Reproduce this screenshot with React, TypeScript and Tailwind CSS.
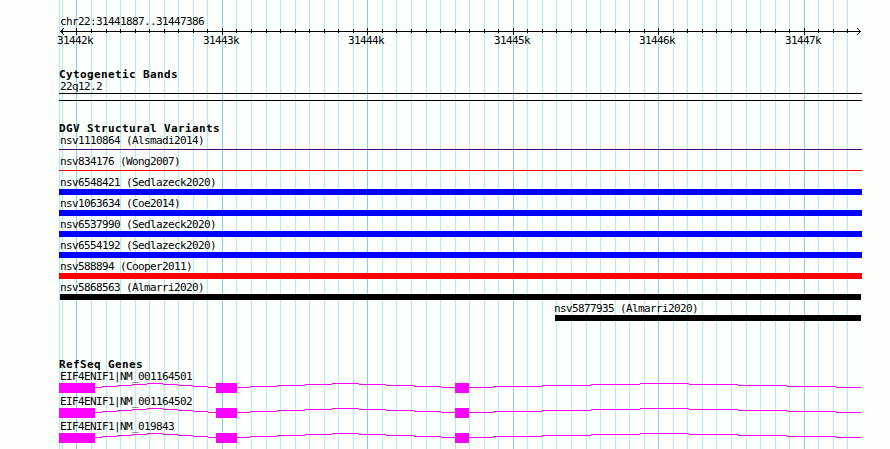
const START = 31441887;
const END = 31447386;
const LEFT = 60;
const WIDTH = 800;

const toX = (bp: number) => Math.round(LEFT + ((bp - START) * WIDTH) / (END - START + 1));

const ticks = Array.from({ length: 55 }, (_, i) => {
  const bp = 31441900 + i * 100;
  return { bp, x: toX(bp), major: bp % 1000 === 0 };
}).filter(t => t.x < 860);

const variants = [
  { name: 'nsv1110864 (Alsmadi2014)', bar: 'mt-[3px] h-px ml-[59px] w-[803px] bg-[#4b0082]' },
  { name: 'nsv834176 (Wong2007)', bar: 'mt-[3px] h-px ml-[59px] w-[803px] bg-[#ff0000]' },
  { name: 'nsv6548421 (Sedlazeck2020)', bar: 'mt-px h-1.5 ml-[59px] w-[803px] bg-[#0000ff]' },
  { name: 'nsv1063634 (Coe2014)', bar: 'mt-px h-1.5 ml-[59px] w-[803px] bg-[#0000ff]' },
  { name: 'nsv6537990 (Sedlazeck2020)', bar: 'mt-px h-1.5 ml-[59px] w-[803px] bg-[#0000ff]' },
  { name: 'nsv6554192 (Sedlazeck2020)', bar: 'mt-px h-1.5 ml-[59px] w-[803px] bg-[#0000ff]' },
  { name: 'nsv588894 (Cooper2011)', bar: 'mt-px h-1.5 ml-[59px] w-[803px] bg-[#ff0000]' },
  { name: 'nsv5868563 (Almarri2020)', bar: 'mt-px h-1.5 ml-[60px] w-[801px] bg-black' },
  { name: 'nsv5877935 (Almarri2020)', bar: 'mt-px h-1.5 ml-[555px] w-[306px] bg-black', indent: true },
];

const genes = ['EIF4ENIF1|NM_001164501', 'EIF4ENIF1|NM_001164502', 'EIF4ENIF1|NM_019843'];
const exons = [[59, 95], [216, 237], [455, 469]];
const introns = [[95, 216], [237, 455], [469, 861]];

// one pixel staircase up to the middle of the intron and back down
const hat = (from: number, to: number) => {
  const step = (to - from) / 8;
  let d = '';
  let x = from;
  for (let i = 0; i <= 8; i++) {
    const next = i === 8 ? to : Math.floor(from + step * (i + 0.5));
    d += `M${x} ${Math.abs(4 - i) + 0.5}H${next}`;
    x = next;
  }
  return d;
};

const Grid = () => (
  <div className="absolute inset-0">
    <div className="absolute inset-y-0 left-[59px] w-px bg-[#afeeee]" />
    {ticks.map(t => (
      <div
        key={t.bp}
        className={`absolute inset-y-0 w-px ${t.major ? 'bg-[#87ceeb]' : 'bg-[#afeeee]'}`}
        style={{ left: t.x }}
      />
    ))}
  </div>
);

const Ruler = () => (
  <div className="relative h-[53px]">
    <Label>chr22:31441887..31447386</Label>
    <svg className="block" width="890" height="9" shapeRendering="crispEdges" stroke="#000" fill="none">
      <path d="M60 4.5H861" />
      {ticks.map(t => (
        <path key={t.bp} d={t.major ? `M${t.x + 0.5} 1V8` : `M${t.x + 0.5} 2V6`} />
      ))}
      <path d="M63.5 1V2M62.5 2V3M61.5 3V4M60.5 4V5M61.5 5V6M62.5 6V7M63.5 7V8" />
      <path d="M857.5 1V2M858.5 2V3M859.5 3V4M860.5 4V5M859.5 5V6M858.5 6V7M857.5 7V8" />
    </svg>
    {ticks.filter(t => t.major).map(t => (
      <span key={t.bp} className="absolute top-[19px] text-[11px] leading-[13px] tracking-[-0.62px]" style={{ left: t.x - 19 }}>
        {t.bp / 1000}k
      </span>
    ))}
  </div>
);

const Title = ({ children }: any) => (
  <h2 className="pl-[59px] h-3 text-[11px] leading-[13px] font-bold tracking-[0.38px]">{children}</h2>
);

const Label = ({ children, indent }: any) => (
  <div className={`h-3 text-[11px] leading-[13px] tracking-[-0.62px] ${indent ? 'pl-[554px]' : 'pl-[60px]'}`}>{children}</div>
);

export default function App() {
  return (
    <div className="relative w-[890px] h-[449px] overflow-hidden bg-[#fcfffc] text-black whitespace-pre font-['DejaVu_Sans_Mono',monospace]">
      <Grid />
      <div className="relative pt-[15px]">
        <Ruler />

        <section className="h-[54px]">
          <Title>Cytogenetic Bands</Title>
          <Label>22q12.2</Label>
          <div className="mt-px ml-[59px] w-[803px] h-2 border-y border-black" />
        </section>

        <section className="h-[236px]">
          <Title>DGV Structural Variants</Title>
          {variants.map(v => (
            <div key={v.name} className="h-[21px]">
              <Label indent={v.indent}>{v.name}</Label>
              <div className={v.bar} />
            </div>
          ))}
        </section>

        <section>
          <Title>RefSeq Genes</Title>
          {genes.map(g => (
            <div key={g} className="h-[25px]">
              <Label>{g}</Label>
              <svg className="block mt-px" width="890" height="10" shapeRendering="crispEdges">
                {introns.map(([a, b]) => <path key={a} d={hat(a, b)} stroke="#ff00ff" fill="none" />)}
                {exons.map(([a, b]) => <rect key={a} x={a} y="0" width={b - a} height="10" fill="#ff00ff" />)}
              </svg>
            </div>
          ))}
        </section>
      </div>
    </div>
  );
}
